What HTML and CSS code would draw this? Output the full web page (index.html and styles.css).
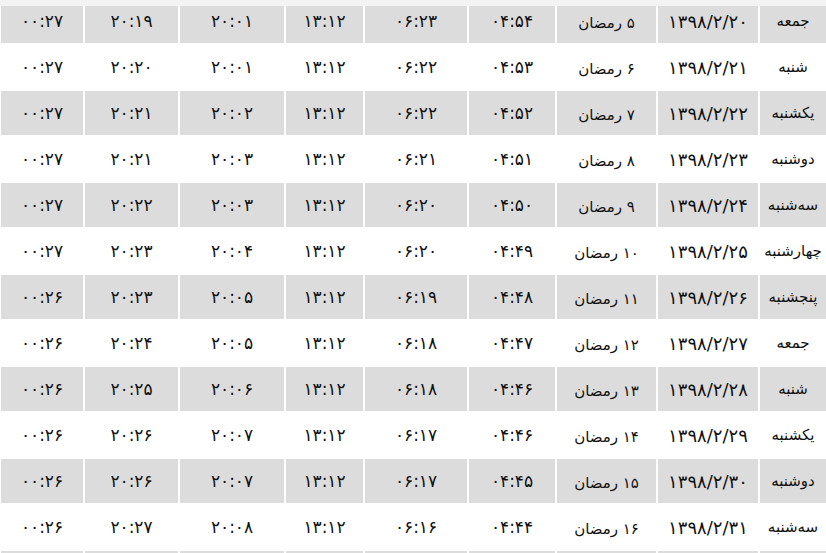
FILE: index.html
```html
<!DOCTYPE html>
<html lang="fa" dir="rtl">
<head>
<meta charset="utf-8">
<title>اوقات شرعی</title>
<link rel="stylesheet" href="styles.css">
</head>
<body>
<div class="topbar"></div>
<div class="table">
  <div class="row odd"><div class="c d">جمعه</div><div class="c dt">۱۳۹۸/۲/۲۰</div><div class="c r">۵ رمضان</div><div class="c">۰۴:۵۴</div><div class="c">۰۶:۲۳</div><div class="c">۱۳:۱۲</div><div class="c">۲۰:۰۱</div><div class="c">۲۰:۱۹</div><div class="c">۰۰:۲۷</div></div>
  <div class="row"><div class="c d">شنبه</div><div class="c dt">۱۳۹۸/۲/۲۱</div><div class="c r">۶ رمضان</div><div class="c">۰۴:۵۳</div><div class="c">۰۶:۲۲</div><div class="c">۱۳:۱۲</div><div class="c">۲۰:۰۱</div><div class="c">۲۰:۲۰</div><div class="c">۰۰:۲۷</div></div>
  <div class="row odd"><div class="c d">یکشنبه</div><div class="c dt">۱۳۹۸/۲/۲۲</div><div class="c r">۷ رمضان</div><div class="c">۰۴:۵۲</div><div class="c">۰۶:۲۲</div><div class="c">۱۳:۱۲</div><div class="c">۲۰:۰۲</div><div class="c">۲۰:۲۱</div><div class="c">۰۰:۲۷</div></div>
  <div class="row"><div class="c d">دوشنبه</div><div class="c dt">۱۳۹۸/۲/۲۳</div><div class="c r">۸ رمضان</div><div class="c">۰۴:۵۱</div><div class="c">۰۶:۲۱</div><div class="c">۱۳:۱۲</div><div class="c">۲۰:۰۳</div><div class="c">۲۰:۲۱</div><div class="c">۰۰:۲۷</div></div>
  <div class="row odd"><div class="c d">سه‌شنبه</div><div class="c dt">۱۳۹۸/۲/۲۴</div><div class="c r">۹ رمضان</div><div class="c">۰۴:۵۰</div><div class="c">۰۶:۲۰</div><div class="c">۱۳:۱۲</div><div class="c">۲۰:۰۳</div><div class="c">۲۰:۲۲</div><div class="c">۰۰:۲۷</div></div>
  <div class="row"><div class="c d">چهارشنبه</div><div class="c dt">۱۳۹۸/۲/۲۵</div><div class="c r">۱۰ رمضان</div><div class="c">۰۴:۴۹</div><div class="c">۰۶:۲۰</div><div class="c">۱۳:۱۲</div><div class="c">۲۰:۰۴</div><div class="c">۲۰:۲۳</div><div class="c">۰۰:۲۷</div></div>
  <div class="row odd"><div class="c d">پنجشنبه</div><div class="c dt">۱۳۹۸/۲/۲۶</div><div class="c r">۱۱ رمضان</div><div class="c">۰۴:۴۸</div><div class="c">۰۶:۱۹</div><div class="c">۱۳:۱۲</div><div class="c">۲۰:۰۵</div><div class="c">۲۰:۲۳</div><div class="c">۰۰:۲۶</div></div>
  <div class="row"><div class="c d">جمعه</div><div class="c dt">۱۳۹۸/۲/۲۷</div><div class="c r">۱۲ رمضان</div><div class="c">۰۴:۴۷</div><div class="c">۰۶:۱۸</div><div class="c">۱۳:۱۲</div><div class="c">۲۰:۰۵</div><div class="c">۲۰:۲۴</div><div class="c">۰۰:۲۶</div></div>
  <div class="row odd"><div class="c d">شنبه</div><div class="c dt">۱۳۹۸/۲/۲۸</div><div class="c r">۱۳ رمضان</div><div class="c">۰۴:۴۶</div><div class="c">۰۶:۱۸</div><div class="c">۱۳:۱۲</div><div class="c">۲۰:۰۶</div><div class="c">۲۰:۲۵</div><div class="c">۰۰:۲۶</div></div>
  <div class="row"><div class="c d">یکشنبه</div><div class="c dt">۱۳۹۸/۲/۲۹</div><div class="c r">۱۴ رمضان</div><div class="c">۰۴:۴۶</div><div class="c">۰۶:۱۷</div><div class="c">۱۳:۱۲</div><div class="c">۲۰:۰۷</div><div class="c">۲۰:۲۶</div><div class="c">۰۰:۲۶</div></div>
  <div class="row odd"><div class="c d">دوشنبه</div><div class="c dt">۱۳۹۸/۲/۳۰</div><div class="c r">۱۵ رمضان</div><div class="c">۰۴:۴۵</div><div class="c">۰۶:۱۷</div><div class="c">۱۳:۱۲</div><div class="c">۲۰:۰۷</div><div class="c">۲۰:۲۶</div><div class="c">۰۰:۲۶</div></div>
  <div class="row"><div class="c d">سه‌شنبه</div><div class="c dt">۱۳۹۸/۲/۳۱</div><div class="c r">۱۶ رمضان</div><div class="c">۰۴:۴۴</div><div class="c">۰۶:۱۶</div><div class="c">۱۳:۱۲</div><div class="c">۲۰:۰۸</div><div class="c">۲۰:۲۷</div><div class="c">۰۰:۲۶</div></div>
  <div class="row odd"><div class="c"></div><div class="c"></div><div class="c"></div><div class="c"></div><div class="c"></div><div class="c"></div><div class="c"></div><div class="c"></div><div class="c"></div></div>
</div>
</body>
</html>
```

FILE: styles.css
```css
html, body {
  margin: 0;
  padding: 0;
  background: #ffffff;
  overflow: hidden;
}

body {
  direction: rtl;
  font-family: "DejaVu Sans", "Noto Sans", sans-serif;
  font-size: 17px;
  color: #111111;
}

.topbar {
  position: fixed;
  top: 0;
  left: 0;
  right: 0;
  height: 6px;
  background: #f3f3f3;
  z-index: 2;
}

.table {
  display: flex;
  flex-direction: column;
  gap: 2px;
  margin-top: -1px;
}

.row {
  display: grid;
  grid-template-columns: 66px 100px 99px 86px 102px 77px 104px 93px 82px;
  gap: 2px;
  height: 44px;
}

.c {
  display: flex;
  align-items: center;
  justify-content: center;
  white-space: nowrap;
  overflow: visible;
}

.d {
  font-size: 15px;
}

.dt {
  font-size: 18px;
}

.r {
  padding-top: 4px;
  font-size: 15px;
}

.odd .c {
  background: #dcdcdc;
}
```
